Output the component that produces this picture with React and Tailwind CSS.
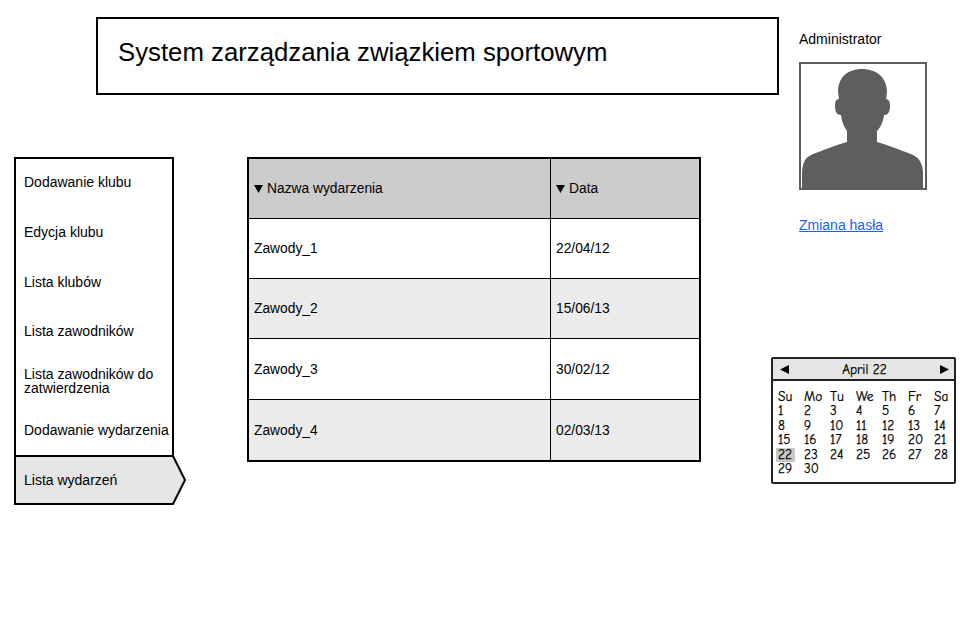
const menu = [
  "Dodawanie klubu",
  "Edycja klubu",
  "Lista klubów",
  "Lista zawodników",
  "Lista zawodników do zatwierdzenia",
  "Dodawanie wydarzenia",
];
const events = [
  ["Zawody_1", "22/04/12", "bg-white", "h-[60px]", "pt-[1px]"],
  ["Zawody_2", "15/06/13", "bg-[#ebebeb]", "h-[60px]", "pt-[1px]"],
  ["Zawody_3", "30/02/12", "bg-white", "h-[61px]", "pt-[2px]"],
  ["Zawody_4", "02/03/13", "bg-[#ebebeb]", "h-[60px]", "pt-[2px]"],
];
const days = ["Su", "Mo", "Tu", "We", "Th", "Fr", "Sa"];
const dates = Array.from({ length: 30 }, (_, i) => i + 1);

function Tri() {
  return (
    <svg width="9" height="8" viewBox="0 0 9 8" className="shrink-0">
      <path d="M0 0H9L4.5 8Z" fill="#000" />
    </svg>
  );
}

export default function App() {
  return (
    <div className="flex w-[960px] h-[630px] bg-white text-black text-[14px] font-['Liberation_Sans',Arial,sans-serif] overflow-hidden">
      <div className="w-[771px] shrink-0">
        <header className="ml-[96px] mt-[17px] w-[683px] h-[78px] border-2 border-black flex items-center pl-[20px] pb-[7px] text-[25.75px]">
          System zarządzania związkiem sportowym
        </header>
        <div className="flex mt-[62px] ml-[14px]">
          <nav className="w-[172px] shrink-0">
            <div className="w-[160px] border-2 border-b-0 border-black">
              <ul>
                {menu.map((m, i) => (
                  <li
                    key={m}
                    className={`flex items-center pl-[8px] leading-[14px] ${i === 0 ? "h-[48.2px] pb-[1.4px]" : "h-[49.6px]"} ${i === 5 ? "whitespace-nowrap" : "pr-1"}`}
                  >
                    {m}
                  </li>
                ))}
              </ul>
            </div>
            <div className="relative h-[50px] flex items-center pl-[10px] pt-[1px]">
              <svg width="172" height="50" viewBox="0 0 172 50" className="absolute inset-0">
                <path d="M1 1H159L171 25L159 49H1Z" fill="#e5e5e5" stroke="#000" strokeWidth="2" />
              </svg>
              <span className="relative">Lista wydarzeń</span>
            </div>
          </nav>
          <section className="ml-[61px] w-[454px] h-[305px] border-2 border-black text-[13.8px]">
            <div className="flex h-[60px] bg-[#cccccc] border-b border-black">
              <div className="w-[302px] border-r border-black flex items-center gap-[4px] pl-[5px] pt-[1px]">
                <Tri /> Nazwa wydarzenia
              </div>
              <div className="flex-1 flex items-center gap-[4px] pl-[5px] pt-[1px]">
                <Tri /> Data
              </div>
            </div>
            {events.map(([n, d, bg, h, pad], i) => (
              <div key={n} className={`flex ${bg} ${h} ${i < 3 ? "border-b border-black" : ""}`}>
                <div className={`w-[302px] border-r border-black flex items-center pl-[5px] ${pad}`}>{n}</div>
                <div className={`flex-1 flex items-center pl-[5px] ${pad}`}>{d}</div>
              </div>
            ))}
          </section>
        </div>
      </div>
      <aside className="flex-1">
        <div className="ml-[28px] mt-[31px] leading-[16px]">Administrator</div>
        <div className="ml-[28px] mt-[15px] w-[128px] h-[128px] border-2 border-[#5e5e5e]">
          <svg width="124" height="124" viewBox="2 2 124 124" className="block">
            <path
              d="M63 7C48 7 39 16 39 30L40 37C37 37 36 40 36 44C36 50 38 53 42 53C43 60 45 65 48 69L48 80C40 82 24 88 12 93C6 96 4 100 3 110L3 126L124 126L124 110C123 100 120 96 114 93C102 88 86 82 78 80L78 69C82 65 84 60 85 53C89 53 91 50 91 44C91 40 90 37 87 37L88 30C88 16 78 7 63 7Z"
              fill="#5e5e5e"
            />
          </svg>
        </div>
        <a href="#" className="block ml-[28px] mt-[27px] leading-[16px] text-[#1a62ee] underline">
          Zmiana hasła
        </a>
        <div className="w-[185px] h-[127px] mt-[124px] border-2 border-[#222] rounded-[2px] font-['Comic_Sans_MS','Comic_Neue',cursive] text-[13.4px] [-webkit-text-stroke:0.25px_black]">
          <div className="h-[20px] bg-[#e5e5e5] border-b-2 border-[#222] flex items-center justify-between pl-[7px] pr-[5px] box-content">
            <svg width="9" height="9" viewBox="0 0 9 9"><path d="M9 0V9L0 4.5Z" fill="#000" /></svg>
            <span className="pt-[2px]">April 22</span>
            <svg width="9" height="9" viewBox="0 0 9 9"><path d="M0 0V9L9 4.5Z" fill="#000" /></svg>
          </div>
          <div className="grid grid-cols-[26px_26px_26px_26px_26px_26px_26px] auto-rows-[14.5px] pl-[3px] pt-[8.5px] leading-[14.5px]">
            {days.map((d) => (
              <div key={d} className="pl-[2px]">{d}</div>
            ))}
            {dates.map((d) => (
              <div key={d} className={`pl-[2px] ${d === 22 ? "bg-[#c8c8c8] w-[19px]" : ""}`}>{d}</div>
            ))}
          </div>
        </div>
      </aside>
    </div>
  );
}
